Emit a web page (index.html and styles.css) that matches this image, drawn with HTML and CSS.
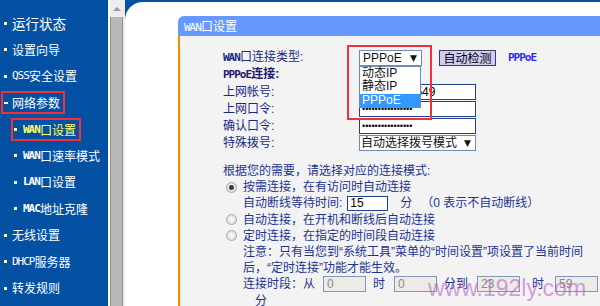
FILE: index.html
```html
<!DOCTYPE html>
<html lang="zh-CN">
<head>
  <meta charset="UTF-8">
  <title>WAN口设置</title>
  <link rel="stylesheet" href="styles.css">
</head>
<body>
  <div class="frame">
    <ul class="menu">
      <li class="item big"><span class="dot"></span>运行状态</li>
      <li class="item"><span class="dot"></span>设置向导</li>
      <li class="item"><span class="dot"></span><span class="en">QSS</span>安全设置</li>
      <li class="item"><span class="mark"><span class="dash"></span>网络参数</span></li>
      <li class="sub current"><span class="mark"><span class="dot"></span><span class="en">WAN</span>口设置</span></li>
      <li class="sub"><span class="dot"></span><span class="en">WAN</span>口速率模式</li>
      <li class="sub"><span class="dot"></span><span class="en">LAN</span>口设置</li>
      <li class="sub"><span class="dot"></span><span class="en">MAC</span>地址克隆</li>
      <li class="item"><span class="dot"></span>无线设置</li>
      <li class="item"><span class="dot"></span><span class="en">DHCP</span>服务器</li>
      <li class="item"><span class="dot"></span>转发规则</li>
    </ul>

    <div class="scroll"><div class="scroll-up"><span class="arrow"></span></div></div>

    <div class="main">
      <div class="sheet">
        <div class="panel">
          <div class="panel-head"><span class="en">WAN</span>口设置</div>
          <div class="panel-body">
            <div class="form">
              <span class="label"><span class="en">WAN</span>口连接类型:</span>
              <div class="ctrl">
                <div class="pick">
                  <div class="select"><span>PPPoE</span><span class="caret">▼</span></div>
                  <ul class="list">
                    <li>动态IP</li>
                    <li>静态IP</li>
                    <li class="hl">PPPoE</li>
                  </ul>
                  <div class="callout"></div>
                </div>
                <button class="detect">自动检测</button>
                <span class="status en">PPPoE</span>
              </div>

              <span class="label full"><span class="en">PPPoE</span>连接:</span>

              <span class="label">上网帐号:</span>
              <div class="ctrl"><input class="field" type="text" value="07551234549"></div>

              <span class="label">上网口令:</span>
              <div class="ctrl"><input class="field secret" type="password" value="1234567890123456"></div>

              <span class="label">确认口令:</span>
              <div class="ctrl"><input class="field secret" type="password" value="1234567890123456"></div>

              <span class="label">特殊拨号:</span>
              <div class="ctrl">
                <div class="select wide"><span>自动选择拨号模式</span><span class="caret">▼</span></div>
              </div>
            </div>

            <div class="modes">
              <p>根据您的需要，请选择对应的连接模式:</p>
              <label class="line"><input class="radio" type="radio" name="mode" checked>按需连接，在有访问时自动连接</label>
              <div class="line pad">自动断线等待时间:<input class="field idle" type="text" value="15"><span class="unit">分</span><span class="hint">（0 表示不自动断线）</span></div>
              <label class="line"><input class="radio" type="radio" name="mode">自动连接，在开机和断线后自动连接</label>
              <label class="line"><input class="radio" type="radio" name="mode">定时连接，在指定的时间段自动连接</label>
              <div class="line pad">注意：只有当您到“系统工具”菜单的“时间设置”项设置了当前时间</div>
              <div class="line pad">后，“定时连接”功能才能生效。</div>
              <div class="line pad">连接时段：从<input class="clock first" type="text" value="0" disabled><span class="gap-s">时</span><input class="clock" type="text" value="0" disabled><span class="gap-s">分到</span><input class="clock" type="text" value="23" disabled><span class="gap-l">时</span><input class="clock last" type="text" value="59" disabled></div>
              <div class="line tail">分</div>
            </div>
          </div>
        </div>
      </div>
    </div>

    <div class="watermark">www.192ly.com</div>
  </div>
</body>
</html>
```

FILE: styles.css
```css
* {
  box-sizing: border-box;
}

body {
  margin: 0;
  width: 600px;
  height: 306px;
  overflow: hidden;
  background: #fff;
  font-family: "Liberation Sans", "Noto Sans CJK SC", sans-serif;
  font-size: 12px;
}

.frame {
  position: relative;
  display: flex;
  height: 306px;
}

/* left menu */
.menu {
  flex: none;
  width: 108px;
  margin: 0;
  padding: 10px 0 0;
  list-style: none;
  background: #0451a3;
  color: #fff;
  font-family: "Noto Sans CJK SC", sans-serif;
}
.menu li {
  display: flex;
  align-items: center;
  height: 26.5px;
  line-height: 14px;
  white-space: nowrap;
}
.menu .item {
  padding-left: 4px;
}
.menu .big {
  font-size: 13.5px;
}
.menu .sub {
  padding-left: 14px;
}
.menu .current {
  color: #ffff66;
}
.en {
  font-family: "DejaVu Sans Mono", monospace;
  font-size: 11px;
  letter-spacing: -1px;
}
.menu .sub .en {
  font-weight: bold;
}
.dot {
  flex: none;
  width: 3px;
  height: 3px;
  margin-right: 5px;
  background: #fffbb0;
}
.sub .dot {
  margin-right: 6px;
}
.dash {
  flex: none;
  width: 4px;
  height: 2px;
  margin-right: 4px;
  background: #fffbb0;
}
.mark {
  display: flex;
  align-items: center;
  padding: 2px 2px 1px 0;
  outline: 2px solid #f2303a;
  outline-offset: 1px;
}

/* scrollbar strip */
.scroll {
  flex: none;
  width: 17px;
  border-left: 2px solid #fff;
  border-right: 2px solid #ececec;
  background: #b9b9b9;
  box-shadow: inset 1px 0 #8f8f8f, inset -1px 0 #8f8f8f;
}
.scroll-up {
  display: flex;
  justify-content: center;
  align-items: center;
  height: 17px;
  background: #ededed;
}
.arrow {
  border-left: 4px solid transparent;
  border-right: 4px solid transparent;
  border-bottom: 4px solid #9a9a9a;
}

/* content */
.main {
  flex: 1;
  padding-top: 2px;
  background: #0451a3;
}
.sheet {
  height: 304px;
  padding: 14px 0 0 53px;
  background: #fff;
  border-top-left-radius: 18px;
}
.panel {
  display: flex;
  flex-direction: column;
  height: 100%;
}
.panel-head {
  height: 20px;
  line-height: 20px;
  padding-left: 6px;
  background: #6699ff;
  color: #fff;
  border-top-left-radius: 6px;
  font-family: "Noto Sans CJK SC", sans-serif;
}
.panel-body {
  flex: 1;
  padding: 13px 0 0 43px;
  background: #f3f3f3;
  border-left: 2px solid #ff8a00;
  color: #1a2a80;
}

.form {
  display: grid;
  grid-template-columns: 136px 1fr;
  grid-auto-rows: 17px;
  align-items: center;
}
.label {
  line-height: 14px;
  white-space: nowrap;
}
.label .en {
  font-weight: bold;
}
.label.full {
  grid-column: 1 / 3;
  font-weight: bold;
  color: #1d1a6a;
}
.ctrl {
  display: flex;
  align-items: center;
}
.pick {
  position: relative;
}
.select {
  display: flex;
  align-items: center;
  justify-content: space-between;
  width: 63px;
  height: 16px;
  padding: 0 4px 0 3px;
  border: 1px solid #6e8bb8;
  background: #fff;
  color: #111;
  line-height: 14px;
}
.select.wide {
  width: 117px;
  padding-left: 1px;
}
.caret {
  font-family: "DejaVu Sans", sans-serif;
  font-size: 9px;
}
.list {
  position: absolute;
  left: 0;
  top: 100%;
  width: 62px;
  margin: 0;
  padding: 0;
  list-style: none;
  background: #fff;
  border: 1px solid #6e8bb8;
  color: #111;
}
.list li {
  height: 13.6px;
  line-height: 13.6px;
  padding-left: 2px;
}
.list .hl {
  background: #3399ff;
  color: #fff;
}
.callout {
  position: absolute;
  left: -12px;
  top: -5px;
  width: 85px;
  height: 75px;
  border: 2px solid #f2303a;
}
.detect {
  width: 57px;
  height: 16px;
  margin-left: 17px;
  padding: 0;
  border: 1px solid #3c3c5a;
  background: #cdcdf7;
  color: #000;
  font: 12px/14px "Noto Sans CJK SC", sans-serif;
}
.status {
  margin-left: 12px;
  color: #2a2aff;
  font-weight: bold;
}
.field {
  width: 117px;
  height: 16px;
  padding: 0 2px;
  border: 1px solid #23408e;
  background: #fff;
  color: #000;
  font: 12px "Liberation Sans", sans-serif;
}
.field.secret {
  font-size: 9px;
}

/* connection modes */
.modes {
  margin-top: 12px;
  line-height: 16.2px;
  color: #1c3390;
  white-space: nowrap;
}
.modes p {
  margin: 0;
}
.line {
  display: flex;
  align-items: center;
  height: 16.2px;
}
.pad {
  padding-left: 20px;
}
.tail {
  padding-left: 32px;
}
.radio {
  appearance: none;
  flex: none;
  width: 11px;
  height: 11px;
  margin: 0 6px 0 3px;
  border: 1px solid #a6a6a6;
  border-radius: 50%;
  background: radial-gradient(circle, #fafafa 0, #d6d6d6 100%);
}
.radio:checked {
  background: radial-gradient(circle, #3c3c3c 0 2px, #ececec 3px, #cfcfcf 100%);
}
.field.idle {
  width: 41px;
  height: 15px;
  margin-left: 5px;
}
.unit {
  margin-left: 12px;
}
.hint {
  margin-left: 9px;
}
.clock {
  width: 43px;
  height: 16px;
  margin-left: 9px;
  padding: 0 3px;
  border: 1px solid #8595b5;
  background: #ecebe6;
  color: #8a8a8a;
  font: 12px "Liberation Sans", sans-serif;
}
.clock.first {
  margin-left: 8px;
}
.clock.last {
  margin-left: 11px;
}
.gap-s {
  margin-left: 7px;
}
.gap-l {
  margin-left: 12px;
}

.watermark {
  position: absolute;
  left: 428px;
  top: 277px;
  font: 23px/1 "Liberation Sans", sans-serif;
  color: rgba(185, 100, 200, 0.6);
  pointer-events: none;
}
```
